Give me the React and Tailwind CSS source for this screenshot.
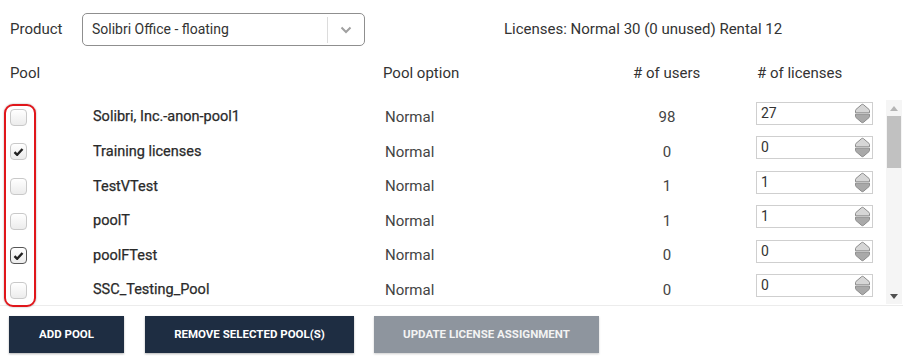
import React from 'react';

const pools = [
  { name: 'Solibri, Inc.-anon-pool1', users: 98, licenses: 27, checked: false },
  { name: 'Training licenses', users: 0, licenses: 0, checked: true },
  { name: 'TestVTest', users: 1, licenses: 1, checked: false },
  { name: 'poolT', users: 1, licenses: 1, checked: false },
  { name: 'poolFTest', users: 0, licenses: 0, checked: true, focused: true },
  { name: 'SSC_Testing_Pool', users: 0, licenses: 0, checked: false },
];

const Spinner = () => (
  <svg width="17" height="21" viewBox="0 0 17 21" className="shrink-0">
    <path d="M1.5 9.8 V7.4 Q1.5 6.8 2 6.4 L7.6 1.6 Q8.5 1 9.4 1.6 L15 6.4 Q15.5 6.8 15.5 7.4 V9.8 Z" fill="#d6d6d6" stroke="#8c8c8c" strokeWidth="1" />
    <path d="M1.5 11.2 V13.6 Q1.5 14.2 2 14.6 L7.6 19.4 Q8.5 20 9.4 19.4 L15 14.6 Q15.5 14.2 15.5 13.6 V11.2 Z" fill="#a9a9a9" stroke="#8c8c8c" strokeWidth="1" />
  </svg>
);

const Checkbox = ({ checked, focused }) => (
  <div
    className={`w-[17px] h-[17px] rounded-[4px] border bg-gradient-to-b from-white to-[#ececec] flex items-center justify-center ${
      focused ? 'border-[#555]' : 'border-[#c9c9c9]'
    }`}
  >
    {checked && (
      <svg width="11" height="10" viewBox="0 0 11 10">
        <path d="M1.5 5.2 L4.2 7.8 L9.5 2" fill="none" stroke="#222" strokeWidth="2.4" strokeLinejoin="round" />
      </svg>
    )}
  </div>
);

const Row = ({ pool }) => (
  <div className="flex h-[34.6px] text-[#333]">
    <div className="w-[93px] pl-[10px] flex items-center">
      <Checkbox checked={pool.checked} focused={pool.focused} />
    </div>
    <div className="w-[292px] flex items-center text-[14.5px] text-[#2a2a2a] [-webkit-text-stroke:0.25px_#2a2a2a]">{pool.name}</div>
    <div className="w-[248px] flex items-center text-[15px] text-[#444]">Normal</div>
    <div className="w-[68px] flex items-center justify-center text-[15px] text-[#444]">{pool.users}</div>
    <div className="ml-[55px] pt-[1.5px]">
      <div className="w-[117px] h-[23px] border border-[#cfcfcf] flex items-center justify-between pl-[4px] pr-[1px] text-[14px] text-[#333]">
        <span>{pool.licenses}</span>
        <Spinner />
      </div>
    </div>
  </div>
);

export default function App() {
  return (
    <div className="w-[906px] h-[362px] bg-white font-['Roboto',sans-serif] text-[#333] relative overflow-hidden">
      {/* product selector */}
      <div className="flex items-center h-[33px] mt-[13px]">
        <span className="ml-[10px] w-[72px] text-[15px]">Product</span>
        <div className="w-[283px] h-[33px] border border-[#8f8f8f] rounded-[5px] flex items-center">
          <span className="flex-1 pl-[9px] text-[14px] text-[#333]">Solibri Office - floating</span>
          <div className="w-[37px] h-[26px] border-l border-[#dcdcdc] flex items-center justify-center">
            <svg width="12" height="8" viewBox="0 0 12 8">
              <path d="M1.5 1.5 L6 6 L10.5 1.5" fill="none" stroke="#a0a0a0" strokeWidth="2" />
            </svg>
          </div>
        </div>
        <span className="ml-[139px] text-[15px] text-[#333]">Licenses: Normal 30 (0 unused) Rental 12</span>
      </div>

      {/* headers */}
      <div className="flex items-center h-[20px] mt-[17px] text-[15px] text-[#333]">
        <span className="ml-[10px] w-[373px]">Pool</span>
        <span className="w-[250px]">Pool option</span>
        <span className="w-[124px]"># of users</span>
        <span># of licenses</span>
      </div>

      {/* list */}
      <div className="flex h-[206px] mt-[17px] w-[903px] border-b border-[#ececec]">
        <div className="w-[886px] overflow-hidden">
          {pools.map((p) => (
            <Row key={p.name} pool={p} />
          ))}
        </div>
        <div className="w-[16px] h-[204px] bg-[#f5f5f5] flex flex-col items-center">
          <div className="h-[16px] flex items-center justify-center">
            <svg width="8" height="5" viewBox="0 0 8 5"><path d="M0 5 L4 0 L8 5 Z" fill="#b5b5b5" /></svg>
          </div>
          <div className="w-[14px] h-[52px] bg-[#c1c1c1]" />
          <div className="flex-1" />
          <div className="h-[16px] flex items-center justify-center">
            <svg width="8" height="5" viewBox="0 0 8 5"><path d="M0 0 L4 5 L8 0 Z" fill="#505050" /></svg>
          </div>
        </div>
      </div>

      {/* red highlight annotation */}
      <div className="absolute left-[4px] top-[104px] w-[32px] h-[203px] border-2 border-[#e0161b] rounded-[9px] shadow-[0_0_2px_rgba(0,0,0,0.35)]" />

      {/* buttons */}
      <div className="flex mt-[10px] ml-[9px] gap-[21px] text-[11.5px] font-bold text-white">
        <button className="w-[115px] h-[37px] bg-[#1e2d42] shadow-[0_1px_2px_rgba(0,0,0,0.3)]">ADD POOL</button>
        <button className="w-[209px] h-[37px] bg-[#1e2d42] shadow-[0_1px_2px_rgba(0,0,0,0.3)]">REMOVE SELECTED POOL(S)</button>
        <button className="w-[225px] h-[37px] bg-[#8e959e] text-[#f3f3f3] shadow-[0_1px_2px_rgba(0,0,0,0.2)] -ml-[1px]">UPDATE LICENSE ASSIGNMENT</button>
      </div>
    </div>
  );
}
